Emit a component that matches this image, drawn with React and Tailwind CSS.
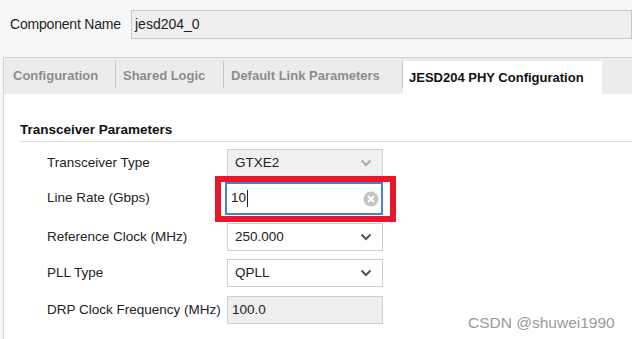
import React from "react";

function Chevron({ color }) {
  return (
    <svg width="12" height="8" viewBox="0 0 12 8" className="shrink-0">
      <path d="M1.5 1.5 L6 6 L10.5 1.5" fill="none" stroke={color} strokeWidth="2" />
    </svg>
  );
}

function ClearIcon() {
  return (
    <svg width="16" height="16" viewBox="0 0 16 16" className="shrink-0">
      <circle cx="8" cy="8" r="7.5" fill="#c4c4c4" />
      <path d="M5 5 L11 11 M11 5 L5 11" stroke="#ffffff" strokeWidth="2" />
    </svg>
  );
}

function Row({ label, children, mt }) {
  return (
    <div className={`flex items-center ${mt}`}>
      <div className="w-[223px] shrink-0 pl-[43px] text-[13.5px] text-[#222] whitespace-nowrap">{label}</div>
      {children}
    </div>
  );
}

export default function App() {
  return (
    <div
      className="relative w-[632px] h-[339px] overflow-hidden bg-[#f7f7f7]"
      style={{ fontFamily: '"Liberation Sans", Arial, sans-serif' }}
    >
      {/* Component name */}
      <div className="flex items-center pt-[10px]">
        <div className="w-[131px] pl-[10px] text-[14px] text-[#1e1e1e] tracking-[-0.2px]">Component Name</div>
        <div className="flex-1 h-[29px] bg-[#efefef] border border-[#c8c8c8] flex items-center pl-[3px] text-[14px] text-[#1e1e1e]">
          jesd204_0
        </div>
      </div>

      {/* Tabbed panel */}
      <div className="ml-[3px] mt-[18px] border-l border-t border-[#d2d2d2] bg-white h-[300px]">
        <div className="flex h-[36px] bg-[#ececec] text-[13px] font-bold">
          <div className="w-[111px] pl-[9px] flex items-center text-[#8c8c8c]">Configuration</div>
          <div className="w-px h-[27px] mt-[3px] bg-[#c6c6c6]" />
          <div className="w-[107px] pl-[7px] flex items-center text-[#8c8c8c]">Shared Logic</div>
          <div className="w-px h-[27px] mt-[3px] bg-[#c6c6c6]" />
          <div className="w-[178px] pl-[7px] flex items-center text-[#8c8c8c]">Default Link Parameters</div>
          <div className="w-px h-[27px] mt-[3px] bg-[#c6c6c6]" />
          <div className="w-[199px] mt-[3px] pl-[6px] pt-[1px] flex items-center bg-white text-[#111]">
            JESD204 PHY Configuration
          </div>
        </div>

        <div className="pt-[28px]">
          <div className="ml-[16px] pb-[3px] border-b border-[#dcdcdc] text-[13.5px] font-bold text-[#111] leading-[16px]">
            Transceiver Parameters
          </div>

          <Row label="Transceiver Type" mt="mt-[7px]">
            <div className="w-[156px] h-[28px] bg-[#f0f0f0] border border-[#d2d2d2] flex items-center justify-between pl-[7px] pr-[10px] text-[13.5px] text-[#222]">
              GTXE2
              <Chevron color="#a8a8a8" />
            </div>
          </Row>

          <Row label="Line Rate (Gbps)" mt="mt-[5px]">
            <div className="-ml-[2px] w-[158px] h-[33px] bg-white border-2 border-[#4d80d6] flex items-center justify-between pl-[4px] pr-[2px] text-[13.5px] text-[#222]">
              <span className="flex items-center">
                10<span className="inline-block w-px h-[17px] bg-[#222] ml-[1px]" />
              </span>
              <ClearIcon />
            </div>
          </Row>

          <Row label="Reference Clock (MHz)" mt="mt-[8px]">
            <div className="w-[156px] h-[28px] bg-white border border-[#cfcfcf] flex items-center justify-between pl-[7px] pr-[10px] text-[13.5px] text-[#222]">
              250.000
              <Chevron color="#555555" />
            </div>
          </Row>

          <Row label="PLL Type" mt="mt-[8px]">
            <div className="w-[156px] h-[28px] bg-white border border-[#cfcfcf] flex items-center justify-between pl-[7px] pr-[10px] text-[13.5px] text-[#222]">
              QPLL
              <Chevron color="#555555" />
            </div>
          </Row>

          <Row label="DRP Clock Frequency (MHz)" mt="mt-[9px]">
            <div className="w-[156px] h-[28px] bg-[#efefef] border border-[#cfcfcf] flex items-center pl-[4px] text-[13.5px] text-[#222]">
              100.0
            </div>
          </Row>
        </div>
      </div>

      {/* Red annotation box */}
      <div className="absolute left-[215px] top-[176px] w-[181px] h-[46px] border-[6px] border-[#e8182a]" />

      {/* Watermark */}
      <div className="absolute left-[468px] top-[314px] text-[15.5px] text-[#9a9a9a] leading-[18px]">
        CSDN @shuwei1990
      </div>
    </div>
  );
}
